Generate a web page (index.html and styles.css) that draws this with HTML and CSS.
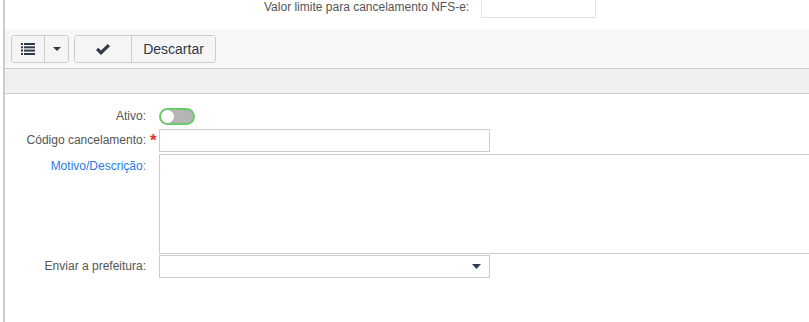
FILE: index.html
```html
<!DOCTYPE html>
<html lang="pt">
<head>
    <meta charset="UTF-8">
    <meta name="viewport" content="width=device-width, initial-scale=1.0">
    <title>Motivo de cancelamento</title>
    <link rel="stylesheet" href="styles.css">
</head>
<body>
    <div class="page">
        <div class="top-row">
            <span class="top-label">Valor limite para cancelamento NFS-e:</span>
            <input type="text" class="top-input">
        </div>

        <div class="toolbar">
            <div class="btn-group">
                <button class="btn btn-list">
                    <svg width="14" height="12" viewBox="0 0 14 12">
                        <rect x="0" y="0" width="2" height="2"/>
                        <rect x="3" y="0" width="11" height="2"/>
                        <rect x="0" y="3.3" width="2" height="2"/>
                        <rect x="3" y="3.3" width="11" height="2"/>
                        <rect x="0" y="6.6" width="2" height="2"/>
                        <rect x="3" y="6.6" width="11" height="2"/>
                        <rect x="0" y="10" width="2" height="2"/>
                        <rect x="3" y="10" width="11" height="2"/>
                    </svg>
                </button>
                <button class="btn btn-caret">
                    <svg width="8" height="4" viewBox="0 0 8 4"><polygon points="0,0 8,0 4,4"/></svg>
                </button>
            </div>
            <div class="btn-group">
                <button class="btn btn-save">
                    <svg width="14" height="11" viewBox="0 0 14 11"><polygon points="0,6 2.3,3.7 5,6.4 11.7,0 14,2.3 5,11"/></svg>
                </button>
                <button class="btn btn-text">Descartar</button>
            </div>
        </div>

        <div class="band"></div>

        <div class="form">
            <label class="form-label row-toggle">Ativo:</label>
            <span class="req"></span>
            <div class="field row-toggle">
                <span class="toggle"><span class="knob"></span></span>
            </div>

            <label class="form-label row-input">Código cancelamento:</label>
            <span class="req row-input">*</span>
            <div class="field row-input">
                <input type="text" class="text-input">
            </div>

            <label class="form-label form-label-link row-area">Motivo/Descrição:</label>
            <span class="req"></span>
            <div class="field row-area">
                <textarea class="text-area"></textarea>
            </div>

            <label class="form-label row-select">Enviar a prefeitura:</label>
            <span class="req"></span>
            <div class="field row-select">
                <div class="select-box">
                    <svg width="9" height="5" viewBox="0 0 9 5"><polygon points="0,0 9,0 4.5,5"/></svg>
                </div>
            </div>
        </div>
    </div>
</body>
</html>
```

FILE: styles.css
```css
body {
    margin: 0;
    padding: 0;
    background-color: #fff;
    font-family: "Liberation Sans", Arial, sans-serif;
    font-size: 12px;
    color: #555;
}

.page {
    margin-left: 3px;
    border-left: 2px solid #ccc;
    height: 322px;
    overflow: hidden;
}

.top-row {
    display: flex;
    align-items: center;
    height: 29px;
    padding-left: 259px;
}

.top-label {
    margin-top: -15px;
    color: #555;
}

.top-input {
    width: 115px;
    height: 22px;
    margin: -16px 0 0 12px;
    border: 1px solid #e2e2e2;
    box-sizing: border-box;
    background: #fff;
}

.toolbar {
    display: flex;
    gap: 5px;
    height: 40px;
    padding: 6px 6px 0;
    box-sizing: border-box;
    background-color: #f7f7f7;
    border-bottom: 1px solid #ccc;
}

.btn-group {
    display: flex;
    height: 28px;
    border: 1px solid #ccc;
    border-radius: 3px;
    overflow: hidden;
    box-sizing: border-box;
}

.btn {
    display: flex;
    align-items: center;
    justify-content: center;
    height: 100%;
    padding: 0;
    border: none;
    background: #f5f5f5;
    color: #2e3a4a;
    fill: #2e3a4a;
    font-family: "Liberation Sans", Arial, sans-serif;
    font-size: 14px;
    cursor: pointer;
}

.btn + .btn {
    border-left: 1px solid #ccc;
}

.btn-list {
    width: 32px;
}

.btn-caret {
    width: 24px;
}

.btn-save {
    width: 56px;
}

.btn-text {
    width: 84px;
}

.band {
    height: 24px;
    background-color: #f0f0f0;
    border-bottom: 1px solid #ccc;
}

.form {
    display: grid;
    grid-template-columns: 141px 13px 1fr;
    padding-top: 14px;
}

.form-label {
    box-sizing: border-box;
    text-align: right;
    color: #555;
    line-height: 16px;
}

.form-label-link {
    color: #2a7ae2;
    padding-top: 4px;
}

.req {
    color: #e0302a;
    font-size: 17px;
    font-weight: bold;
    line-height: 20px;
    padding-left: 4px;
}

.row-toggle {
    height: 17px;
    margin-bottom: 4px;
}

.row-input {
    height: 23px;
    margin-bottom: 2px;
    line-height: 23px;
}

.row-area {
    height: 100px;
    margin-bottom: 1px;
}

.row-select {
    height: 23px;
    line-height: 23px;
}

.toggle {
    display: block;
    width: 36px;
    height: 17px;
    box-sizing: border-box;
    border: 2px solid #6acb6a;
    border-radius: 9px;
    background-color: #b5b5b5;
    position: relative;
}

.knob {
    position: absolute;
    left: 0;
    top: 0;
    width: 13px;
    height: 13px;
    border-radius: 50%;
    background-color: #fff;
}

.text-input {
    display: block;
    width: 331px;
    height: 23px;
    margin: 0;
    border: 1px solid #ccc;
    box-sizing: border-box;
}

.text-area {
    display: block;
    width: 670px;
    height: 100px;
    margin: 0;
    border: 1px solid #ccc;
    box-sizing: border-box;
    resize: none;
}

.select-box {
    display: flex;
    align-items: center;
    justify-content: flex-end;
    width: 331px;
    height: 23px;
    padding-right: 8px;
    border: 1px solid #ccc;
    box-sizing: border-box;
    fill: #2e3a4a;
}
```
